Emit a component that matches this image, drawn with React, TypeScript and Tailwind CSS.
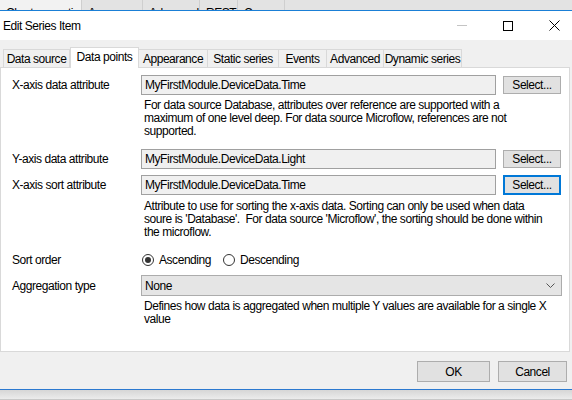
import React from "react";

const font = { fontFamily: '"Liberation Sans", Arial, sans-serif' };

const bgTabs = [
  { name: "Chart propertie", w: "w-[82px]", light: true },
  { name: "A", w: "w-[61px]" },
  { name: "Advanced", w: "w-[57px]" },
  { name: "REST", w: "w-[38px]" },
  { name: "C", w: "w-[47px]" },
];

const tabs = [
  { name: "Data source", w: "w-[67px]" },
  { name: "Data points", w: "w-[69px]", active: true },
  { name: "Appearance", w: "w-[69px]" },
  { name: "Static series", w: "w-[71px]" },
  { name: "Events", w: "w-[48px]" },
  { name: "Advanced", w: "w-[57px]" },
  { name: "Dynamic series", w: "w-[78px]" },
];

const Label: React.FC<{ children: React.ReactNode }> = ({ children }) => (
  <div className="w-[140px] shrink-0 pl-[11px] whitespace-nowrap">{children}</div>
);

const AttrRow: React.FC<{ label: string; value: string; focused?: boolean; className?: string }> = ({
  label,
  value,
  focused,
  className,
}) => (
  <div className={`flex items-center h-[20px] ${className ?? ""}`}>
    <Label>{label}</Label>
    <div className="w-[355px] h-[20px] border border-[#a0a0a0] bg-[#f0f0f0] flex items-center pl-[3px] whitespace-nowrap">
      {value}
    </div>
    <button
      className={`ml-[7px] w-[58px] flex items-center justify-center bg-[#e1e1e1] ${
        focused ? "h-[20px] border-2 border-[#0078d7]" : "h-[18px] border border-[#adadad]"
      }`}
    >
      Select...
    </button>
  </div>
);

const Help: React.FC<{ lines: string[]; className?: string }> = ({ lines, className }) => (
  <div className={`pl-[143px] leading-[13px] ${className ?? ""}`}>
    {lines.map((l) => (
      <div key={l} className="whitespace-pre">
        {l}
      </div>
    ))}
  </div>
);

const Radio: React.FC<{ checked?: boolean; label: string }> = ({ checked, label }) => (
  <div className="flex items-center gap-[5px]">
    <span className="w-[12px] h-[12px] rounded-full border border-[#333333] bg-white flex items-center justify-center">
      {checked && <span className="w-[6px] h-[6px] rounded-full bg-[#333333]" />}
    </span>
    <span>{label}</span>
  </div>
);

export default function App() {
  return (
    <div
      className="w-[572px] h-[400px] overflow-hidden flex flex-col text-[12px] tracking-[-0.45px] text-black bg-[#f0f0f0]"
      style={font}
    >
      {/* background window tabs */}
      <div className="h-[10px] shrink-0 flex bg-[#e3e3e3] overflow-hidden">
        {bgTabs.map((t) => (
          <div
            key={t.name}
            className={`${t.w} h-[20px] pl-[6px] pt-[4px] border-r border-[#cfcfcf] whitespace-nowrap overflow-hidden ${
              t.light ? "bg-[#f2f2f2]" : ""
            }`}
          >
            {t.name}
          </div>
        ))}
      </div>
      <div className="h-px shrink-0 bg-[#1a7fd6]" />

      {/* title bar */}
      <div className="h-[29px] shrink-0 bg-white flex items-center pl-[3px]">
        <span>Edit Series Item</span>
        <div className="ml-auto flex items-center h-full">
          <span className="w-[10px] h-px bg-[#c4c4c4] mr-[36px]" />
          <span className="w-[10px] h-[10px] border border-black mr-[36px]" />
          <svg width="11" height="11" viewBox="0 0 11 11" className="mr-[12px]">
            <path d="M0.5 0.5 L10.5 10.5 M10.5 0.5 L0.5 10.5" stroke="#000" strokeWidth="1" />
          </svg>
        </div>
      </div>

      {/* body */}
      <div className="flex-1 flex flex-col">
        <div className="flex items-end h-[27px] pl-[3px]">
          {tabs.map((t) =>
            t.active ? (
              <div
                key={t.name}
                className={`${t.w} h-[21px] -mb-px relative z-10 bg-white border border-b-0 border-[#d9d9d9] flex items-center justify-center pb-[2px] whitespace-nowrap`}
              >
                {t.name}
              </div>
            ) : (
              <div
                key={t.name}
                className={`${t.w} h-[18px] bg-[#f0f0f0] border border-b-0 border-l-0 first:border-l border-[#d9d9d9] flex items-center justify-center whitespace-nowrap`}
              >
                {t.name}
              </div>
            )
          )}
        </div>

        <div className="w-[570px] h-[285px] bg-white border border-[#d9d9d9] flex flex-col">
          <AttrRow className="mt-[7px]" label="X-axis data attribute" value="MyFirstModule.DeviceData.Time" />
          <Help
            className="mt-[4px]"
            lines={[
              "For data source Database, attributes over reference are supported with a",
              "maximum of one level deep. For data source Microflow, references are not",
              "supported.",
            ]}
          />
          <AttrRow className="mt-[11px]" label="Y-axis data attribute" value="MyFirstModule.DeviceData.Light" />
          <AttrRow className="mt-[6px]" label="X-axis sort attribute" value="MyFirstModule.DeviceData.Time" focused />
          <Help
            className="mt-[5px]"
            lines={[
              "Attribute to use for sorting the x-axis data. Sorting can only be used when data",
              "soure is 'Database'.  For data source 'Microflow', the sorting should be done within",
              "the microflow.",
            ]}
          />
          <div className="flex items-center h-[16px] mt-[13px]">
            <Label>Sort order</Label>
            <div className="flex items-center gap-[12px] pl-[1px]">
              <Radio checked label="Ascending" />
              <Radio label="Descending" />
            </div>
          </div>
          <div className="flex items-center h-[21px] mt-[7px]">
            <Label>Aggregation type</Label>
            <div className="w-[421px] h-[21px] bg-[#e5e5e5] border border-[#acacac] flex items-center pl-[3px] pr-[6px]">
              <span>None</span>
              <svg width="9" height="5" viewBox="0 0 9 5" className="ml-auto">
                <path d="M0.5 0.5 L4.5 4.5 L8.5 0.5" fill="none" stroke="#555" strokeWidth="1" />
              </svg>
            </div>
          </div>
          <Help
            className="mt-[4px]"
            lines={[
              "Defines how data is aggregated when multiple Y values are available for a single X",
              "value",
            ]}
          />
        </div>

        <div className="flex justify-end gap-[8px] mt-[9px] pr-[5px]">
          <button className="w-[73px] h-[21px] bg-[#e1e1e1] border border-[#adadad]">OK</button>
          <button className="w-[69px] h-[21px] bg-[#e1e1e1] border border-[#adadad]">Cancel</button>
        </div>
      </div>

      <div className="h-px shrink-0 bg-[#2b79d0]" />
      <div className="h-[10px] shrink-0 bg-gradient-to-b from-[#d6d6d6] to-[#ececec] border-b border-[#c8c8c8]" />
    </div>
  );
}
